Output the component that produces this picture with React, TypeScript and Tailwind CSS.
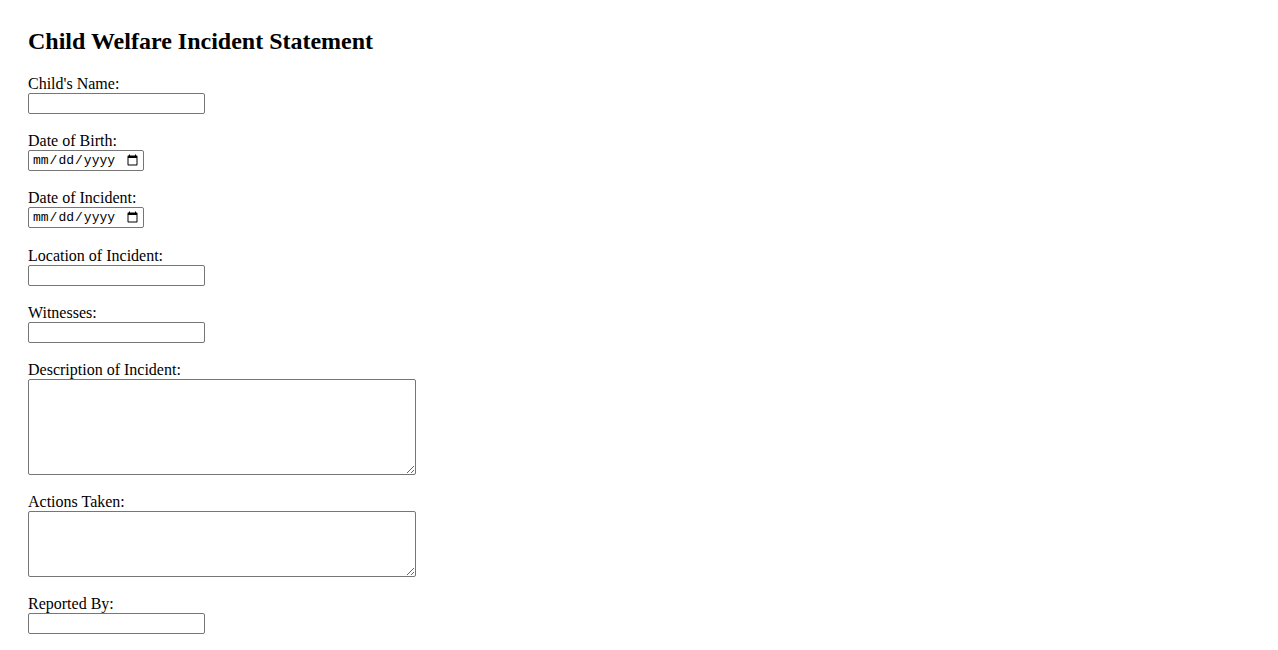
import React from 'react';

const fieldBox = 'block border border-[#767676] rounded-[2px] bg-white outline-none';

const TextField = ({ id, label }: { id: string; label: string }) => (
  <div className="mb-[18px]">
    <label htmlFor={id} className="block leading-[18px]">{label}</label>
    <input id={id} type="text" className={`${fieldBox} w-[177px] h-[21px] px-[2px] text-[13px]`} />
  </div>
);

const DateField = ({ id, label, gap = 'mb-[18px]' }: { id: string; label: string; gap?: string }) => (
  <div className={gap}>
    <label htmlFor={id} className="block leading-[18px]">{label}</label>
    <input
      id={id}
      type="date"
      className={`${fieldBox} w-[116px] h-[21px] pl-[3px] pr-[2px] text-[13px] font-['Liberation_Mono',monospace] text-black`}
    />
  </div>
);

const AreaField = ({ id, label, height }: { id: string; label: string; height: string }) => (
  <div className="mb-[18px]">
    <label htmlFor={id} className="block leading-[18px]">{label}</label>
    <textarea id={id} className={`${fieldBox} w-[388px] ${height} p-[2px] text-[13px] resize`} />
  </div>
);

export default function App() {
  return (
    <div className="min-h-screen bg-white text-black px-[28px] pt-[28px] text-[16px] font-['Liberation_Serif','Times_New_Roman',serif]">
      <h2 className="text-[24px] font-bold leading-[27px] mb-[20px]">Child Welfare Incident Statement</h2>
      <form>
        <TextField id="childName" label="Child's Name:" />
        <DateField id="dob" label="Date of Birth:" />
        <DateField id="incidentDate" label="Date of Incident:" gap="mb-[19px]" />
        <TextField id="location" label="Location of Incident:" />
        <TextField id="witnesses" label="Witnesses:" />
        <AreaField id="description" label="Description of Incident:" height="h-[96px]" />
        <AreaField id="actions" label="Actions Taken:" height="h-[66px]" />
        <TextField id="reportedBy" label="Reported By:" />
      </form>
    </div>
  );
}
